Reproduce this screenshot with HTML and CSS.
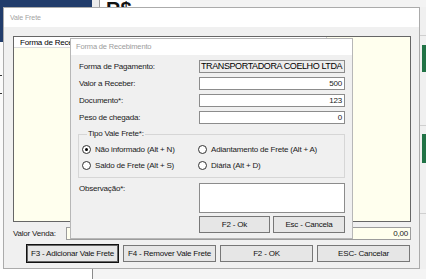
FILE: index.html
```html
<!DOCTYPE html>
<html lang="pt-BR">
<head>
<meta charset="utf-8">
<title>Vale Frete</title>
<link rel="stylesheet" href="styles.css">
</head>
<body>
<div class="desktop">
  <div class="bg-nav"></div>
  <div class="bg-nav-side"></div>
  <div class="bg-left"><span class="dash d1"></span><span class="dash d2"></span></div>
  <div class="bg-top">
    <div class="bg-top-gap"></div>
    <div class="bg-top-cell"><span class="rs">R$</span></div>
  </div>
  <div class="bg-right">
    <div class="rs-line l1"></div>
    <div class="green g1"></div>
    <div class="rs-line l2"></div>
    <div class="green g2"></div>
    <div class="rs-line l3"></div>
  </div>
  <div class="bg-bottom"><div class="bb-left"></div></div>

  <div class="win win-outer">
    <div class="titlebar">Vale Frete</div>
    <div class="outer-body">
      <div class="grid">
        <div class="grid-head">Forma de Recebimento</div>
      </div>
      <div class="venda-row">
        <span class="venda-label">Valor Venda:</span>
        <div class="venda-field">0,00</div>
      </div>
      <div class="btn-row">
        <div class="btn default">F3 - Adicionar Vale Frete</div>
        <div class="btn">F4 - Remover Vale Frete</div>
        <div class="btn">F2 - OK</div>
        <div class="btn">ESC- Cancelar</div>
      </div>
    </div>
  </div>

  <div class="win win-inner">
    <div class="inner-title">Forma de Recebimento</div>
    <div class="inner-body">
      <div class="form">
        <span class="lbl">Forma de Pagamento:</span>
        <div class="field ro">TRANSPORTADORA COELHO LTDA</div>
        <span class="lbl">Valor a Receber:</span>
        <div class="field">500</div>
        <span class="lbl">Documento*:</span>
        <div class="field">123</div>
        <span class="lbl">Peso de chegada:</span>
        <div class="field">0</div>
      </div>
      <fieldset class="tipo">
        <legend>Tipo Vale Frete*:</legend>
        <div class="radios">
          <div class="radio"><span class="dot on"></span><span>Não informado (Alt + N)</span></div>
          <div class="radio"><span class="dot"></span><span>Adiantamento de Frete (Alt + A)</span></div>
          <div class="radio"><span class="dot"></span><span>Saldo de Frete (Alt + S)</span></div>
          <div class="radio"><span class="dot"></span><span>Diária (Alt + D)</span></div>
        </div>
      </fieldset>
      <div class="obs">
        <span class="lbl obs-lbl">Observação*:</span>
        <div class="memo"></div>
        <span></span>
        <div class="ok-row">
          <div class="btn small">F2 - Ok</div>
          <div class="btn small wide">Esc - Cancela</div>
        </div>
      </div>
    </div>
  </div>
</div>
</body>
</html>
```

FILE: styles.css
```css
* { box-sizing: border-box; }
html, body { margin: 0; padding: 0; }
body {
  width: 426px;
  height: 279px;
  overflow: hidden;
  background: #f0f0f0;
  font-family: "Liberation Sans", Arial, sans-serif;
  font-size: 8px;
  letter-spacing: -0.2px;
  color: #1a1a1a;
}
.desktop { position: relative; width: 426px; height: 279px; }

/* background application fragments */
.bg-nav { position: absolute; left: 0; top: 0; width: 92px; height: 7px; background: #213c6b; }
.bg-nav-side { position: absolute; left: 0; top: 7px; width: 3px; height: 35px; background: #213c6b; }
.bg-left { position: absolute; left: 0; top: 42px; width: 3px; height: 227px; background: #fafafa; }
.dash { position: absolute; left: 0; width: 2px; height: 1px; background: #333; }
.d1 { top: 33px; }
.d2 { top: 51px; }
.bg-top { position: absolute; left: 92px; top: 0; width: 334px; height: 7px; display: flex; background: #f3f3f3; }
.bg-top-gap { width: 8px; border-right: 1px solid #9a9a9a; background: #ececec; }
.bg-top-cell { width: 80px; background: #fff; position: relative; overflow: hidden; }
.rs { position: absolute; left: 6px; top: -1px; font-weight: bold; font-size: 20px; line-height: 20px; letter-spacing: 0; color: #111; }
.bg-right { position: absolute; left: 420px; top: 7px; width: 6px; height: 262px; background: #f0f0f0; }
.rs-line { position: absolute; left: 0; width: 6px; height: 1px; background: #cfcfcf; }
.l1 { top: 28px; }
.l2 { top: 118px; }
.l3 { top: 206px; }
.green { position: absolute; left: 2px; width: 4px; background: #217346; }
.g1 { top: 38px; height: 27px; }
.g2 { top: 127px; height: 29px; }
.bg-bottom { position: absolute; left: 0; top: 269px; width: 426px; height: 10px; background: #f4f4f4; }
.bb-left { width: 93px; height: 10px; background: #fff; border-right: 1px solid #8a8a8a; }

/* windows */
.win { position: absolute; background: #f0f0f0; }
.win-outer {
  left: 3px; top: 7px; width: 417px; height: 262px;
  border: 1px solid #ababab;
  display: flex; flex-direction: column;
}
.titlebar {
  flex: none; height: 19px; line-height: 19px; padding-left: 6px;
  background: #fff; color: #a3a3a3; font-size: 7px; letter-spacing: -0.1px;
}
.outer-body { padding: 9px 8px 0 9px; display: flex; flex-direction: column; }
.grid { height: 186px; border: 1px solid #666; background: #ffffee; }
.grid-head {
  width: 313px; height: 11px; line-height: 11px; padding-left: 6px;
  background: #fff; border-bottom: 1px solid #dcdcdc; border-right: 1px solid #d0d0d0;
  white-space: nowrap; overflow: hidden; color: #000;
}
.venda-row { margin-top: 5px; height: 13px; display: flex; align-items: center; }
.venda-label { width: 53px; flex: none; }
.venda-field {
  flex: 1; height: 13px; line-height: 11px; padding-right: 2px; text-align: right;
  border: 1px solid #9c9c9c; background: #ffffee;
}
.btn-row { margin-top: 4px; height: 19px; display: flex; align-items: center; gap: 4px; padding-left: 13px; }
.btn {
  width: 93px; height: 17px; flex: none;
  display: flex; align-items: center; justify-content: center;
  border: 1px solid #777; background: #e6e6e6; color: #111; white-space: nowrap;
}
.btn.default { height: 19px; border: 1px solid #111; box-shadow: inset 0 0 0 1px #666; }

.win-inner {
  left: 70px; top: 38px; width: 283px; height: 201px;
  border: 1px solid #b7b7b7;
}
.inner-title {
  height: 16px; line-height: 16px; padding-left: 5px;
  background: #fff; color: #9c9c9c; font-size: 7.5px; letter-spacing: -0.15px;
}
.inner-body { padding: 5px 7px 0 8px; }
.form { display: grid; grid-template-columns: 120px 146px; grid-auto-rows: 13px; row-gap: 4px; align-items: center; }
.lbl { white-space: nowrap; }
.field {
  height: 13px; line-height: 11px; padding: 0 2px; text-align: right;
  border: 1px solid #8c8c8c; background: #fff; white-space: nowrap; overflow: hidden;
}
.field.ro { background: #ededed; text-align: left; padding: 0 1px; font-size: 9px; letter-spacing: -0.4px; color: #000; }

.tipo { margin: 4px 0 0 -1px; padding: 1px 0 4px 3px; border: 1px solid #d6d6d6; min-width: 0; }
.tipo legend { margin-left: 5px; padding: 0 1px; line-height: 12px; }
.radios { display: grid; grid-template-columns: 116px 1fr; grid-auto-rows: 16px; align-items: center; }
.radio { display: flex; align-items: center; gap: 4px; white-space: nowrap; }
.dot { width: 9px; height: 9px; flex: none; border: 1px solid #333; border-radius: 50%; background: #fff; position: relative; }
.dot.on::after {
  content: ""; position: absolute; left: 2px; top: 2px; width: 3px; height: 3px;
  border-radius: 50%; background: #000;
}
.obs { margin-top: 5px; display: grid; grid-template-columns: 120px 146px; row-gap: 3px; }
.obs-lbl { line-height: 11px; }
.memo { height: 30px; border: 1px solid #8c8c8c; background: #fff; }
.ok-row { display: flex; gap: 3px; }
.btn.small { width: 71px; }
.btn.small.wide { width: 72px; }
```
